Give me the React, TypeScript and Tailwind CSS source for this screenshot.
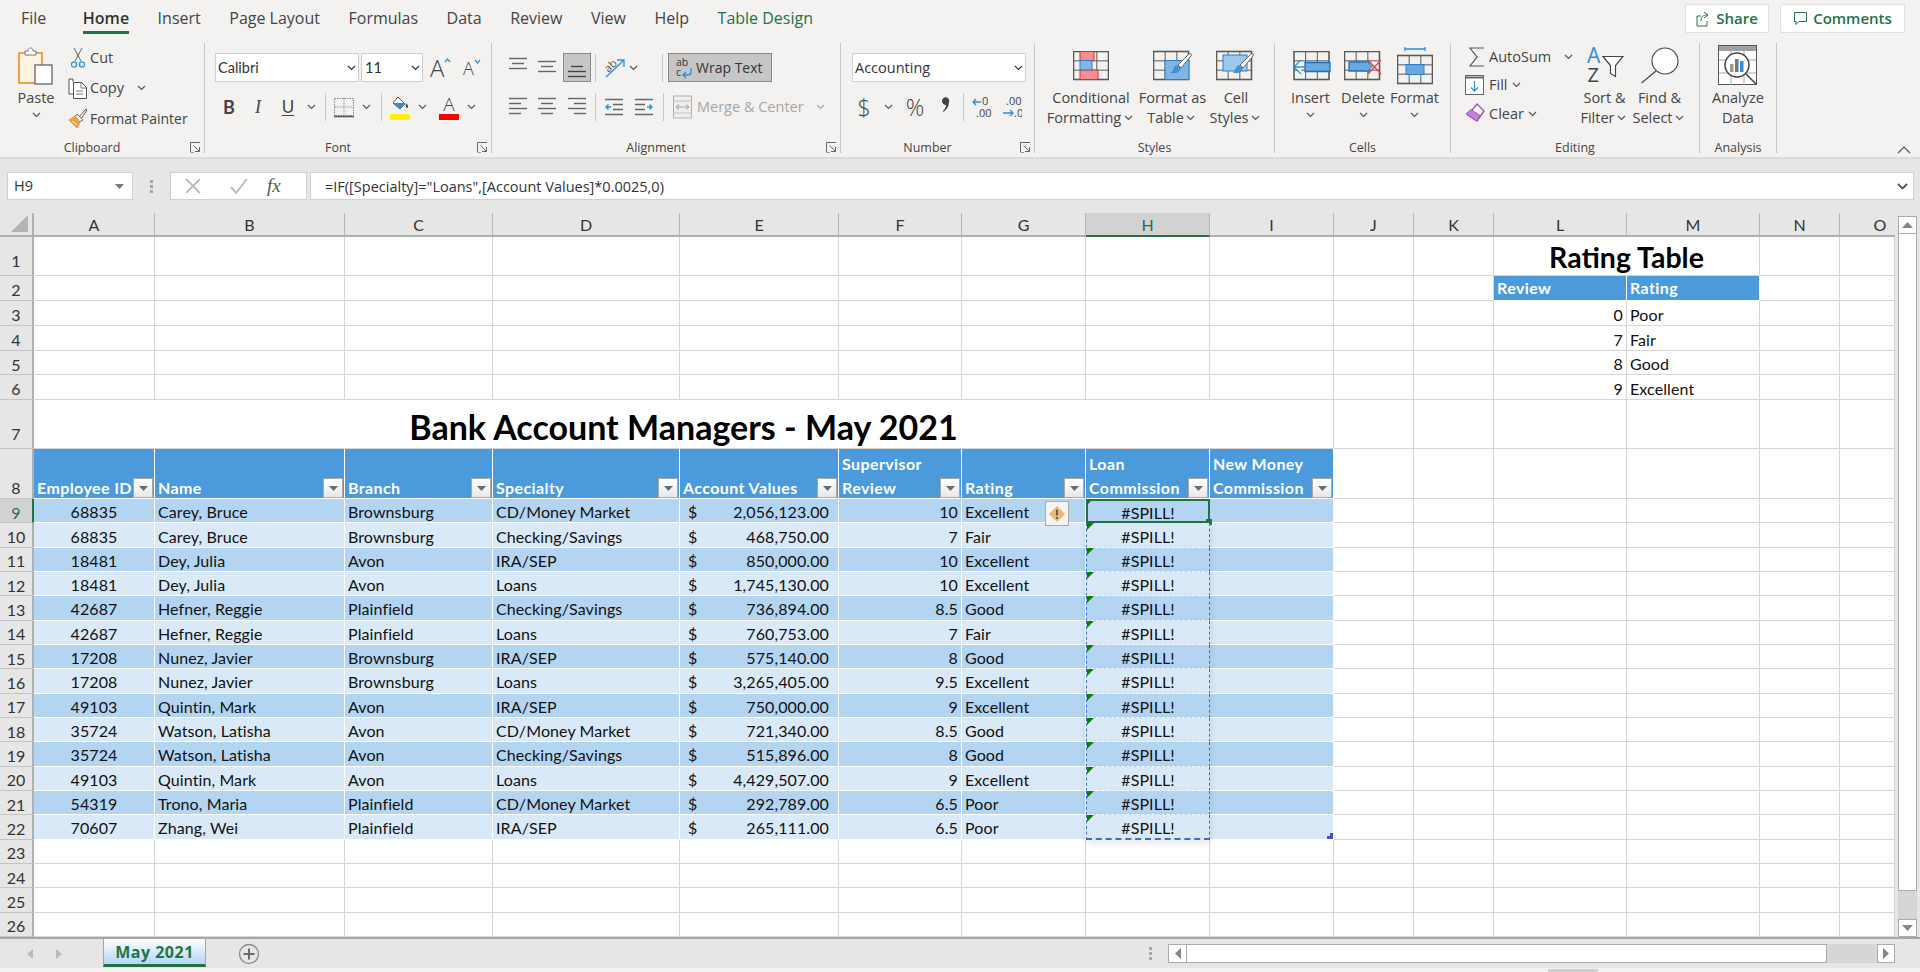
import React from "react";

const UI = "font-['Open_Sans','Noto_Sans',sans-serif]";
const SHEET = "font-['Lato','Carlito','Open_Sans',sans-serif]";

const Chev = ({ className = "w-[14px]", c = "#555" }: { className?: string; c?: string }) => (
  <span className={`flex shrink-0 justify-center ${className}`}>
    <svg width="9" height="6" viewBox="0 0 9 6"><path d="M1 1l3.5 3.5L8 1" fill="none" stroke={c} strokeWidth="1.2" /></svg>
  </span>
);

const Launcher = () => (
  <svg className="absolute right-[3px] bottom-[0px]" width="11" height="11" viewBox="0 0 11 11">
    <path d="M.5 10V.5H10" fill="none" stroke="#666" />
    <path d="M3.5 3.5L9.5 9.5M9.5 5v4.5H5" fill="none" stroke="#666" />
    <path d="M.5 10.5H4" stroke="#999" />
  </svg>
);

const Group = ({ className, label, launcher, children }: { className: string; label: string; launcher?: boolean; children: React.ReactNode }) => (
  <div className={`relative flex h-[110px] shrink-0 flex-col border-r border-[#c8c6c4] ${className}`}>
    <div className="h-[97px] shrink-0">{children}</div>
    <div className={`text-center text-[12.5px] leading-[16px] text-[#444] ${launcher ? "pr-[20px]" : ""}`}>{label}</div>
    {launcher && <Launcher />}
  </div>
);

const Sep = ({ className }: { className: string }) => <span className={`block h-[28px] w-px shrink-0 bg-[#c8c6c4] ${className}`} />;

const Select = ({ text, className }: { text: string; className: string }) => (
  <div className={`flex h-[29px] items-center justify-between border border-[#d2d0ce] bg-white pl-[2px] text-[14.5px] text-[#333] ${className}`}>
    <span>{text}</span>
    <Chev className="w-[14px]" c="#333" />
  </div>
);

const Lines = ({ rows, c = "#666" }: { rows: [number, number, number][]; c?: string }) => (
  <svg width="18" height="22" viewBox="0 0 18 22">
    {rows.map(([a, b, y], i) => (
      <path key={i} d={`M${a} ${y + 0.5}H${b}`} stroke={c} strokeWidth="1.4" />
    ))}
  </svg>
);

const TableGrid = ({ w = 35, h = 28, x = 0.5, y = 0.5 }: { w?: number; h?: number; x?: number; y?: number }) => (
  <g fill="none" stroke="#5a5a5a" strokeWidth="1">
    <rect x={x} y={y} width={w} height={h} strokeWidth="1.6" />
    <path d={`M${x + w / 3} ${y}V${y + h}M${x + (2 * w) / 3} ${y}V${y + h}M${x} ${y + h / 3}H${x + w}M${x} ${y + (2 * h) / 3}H${x + w}`} />
  </g>
);

const Brush = ({ dx = 0, dy = 0 }: { dx?: number; dy?: number }) => (
  <g transform={`translate(${dx} ${dy})`}>
    <path d="M21 1c2-1 3 0 2 2L13 15l-3-3z" fill="#fff" stroke="#666" />
    <path d="M9 12.5l3.5 3c-1 3-4 5-9 4 2-1 2-2 2.500-4 .5-2 2-3 3-3z" fill="#3d9ad9" stroke="#2a7ab8" strokeWidth=".6" />
  </g>
);

const Big = ({ className, icon, lines, chevInline, chevBelow }: { className: string; icon: React.ReactNode; lines: string[]; chevInline?: boolean; chevBelow?: boolean }) => (
  <div className={`flex shrink-0 flex-col items-center text-[14.5px] leading-[20px] text-[#444] ${className}`}>
    <div className="mt-[4px] mb-[1px] flex h-[40px] items-start justify-center">{icon}</div>
    {lines.map((l, i) => (
      <div key={i} className="flex items-center whitespace-nowrap">
        {l}
        {chevInline && i === lines.length - 1 && <Chev className="w-[14px]" />}
      </div>
    ))}
    {chevBelow && <Chev className="mt-[4px] w-[14px]" />}
  </div>
);

function Ribbon() {
  return (
    <div className="flex h-[119px] shrink-0 border-b-2 border-[#dcdcdc] pt-[3px] text-[14.5px] text-[#444]">
      <Group className="w-[205px]" label="Clipboard" launcher>
        <div className="flex">
          <div className="w-[66px]">
            <Big
              className="w-[72px]"
              lines={["Paste"]}
              chevBelow
              icon={
                <svg width="36" height="38" viewBox="0 0 36 38">
                  <rect x="1" y="6" width="23" height="30" fill="#fdf3e3" stroke="#eba24a" strokeWidth="2" />
                  <path d="M7 8V4h3c0-4 5-4 5 0h3v4z" fill="#fff" stroke="#777" />
                  <rect x="17" y="18" width="17" height="19" fill="#fff" stroke="#666" strokeWidth="1.3" />
                </svg>
              }
            />
          </div>
          <div className="flex w-[139px] flex-col">
            <div className="flex h-[30px] items-center">
              <span className="flex w-[24px] justify-center">
                <svg width="14" height="22" viewBox="0 0 14 22">
                  <path d="M3 1l7 13M11 1L4 14" stroke="#666" fill="none" />
                  <circle cx="3" cy="17.500" r="2.600" fill="none" stroke="#2e8fd6" strokeWidth="1.3" />
                  <circle cx="11" cy="17.500" r="2.600" fill="none" stroke="#2e8fd6" strokeWidth="1.300" />
                </svg>
              </span>
              Cut
            </div>
            <div className="flex h-[30px] items-center">
              <span className="flex w-[24px] justify-center">
                <svg width="20" height="21" viewBox="0 0 20 21">
                  <path d="M5 4V1h-4v15h4" fill="#fff" stroke="#555" />
                  <path d="M5.500 4.500h8l5 5v11h-13z" fill="#fff" stroke="#555" />
                  <path d="M13 5v5h5M8 13h7M8 16h7" fill="none" stroke="#777" />
                </svg>
              </span>
              Copy
              <Chev className="ml-[10px] w-[14px]" />
            </div>
            <div className="flex h-[30px] items-center text-[14px]">
              <span className="flex w-[24px] justify-center">
                <svg width="20" height="22" viewBox="0 0 20 22">
                  <path d="M11 10L18 2l1 1-6 9z" fill="#fff" stroke="#555" />
                  <path d="M9 7l6 6-4 2-4-5z" fill="#fff" stroke="#666" />
                  <path d="M7 9l5 6-3 6-8-8z" fill="#f3a33e" stroke="#d9822b" strokeWidth=".8" />
                  <path d="M4 14l5 4" stroke="#fff" strokeWidth=".8" />
                </svg>
              </span>
              Format Painter
            </div>
          </div>
        </div>
      </Group>

      <Group className="w-[287px]" label="Font" launcher>
        <div className="mt-[10px] flex items-center pl-[10px]">
          <Select text="Calibri" className={`w-[144px] ${SHEET}`} />
          <Select text="11" className={`ml-[2px] w-[62px] pl-[3px] ${SHEET}`} />
          <span className="ml-[7px] flex w-[22px] items-start text-[24px] leading-[26px] font-light text-[#444]">A<svg className="mt-[3px] shrink-0" width="7" height="5" viewBox="0 0 7 5"><path d="M1 4l2.500-3L6 4" fill="none" stroke="#2e8fd6" strokeWidth="1.200" /></svg></span>
          <span className="ml-[11px] flex w-[20px] items-start text-[18px] leading-[26px] font-light text-[#444]">A<svg className="mt-[4px] shrink-0" width="7" height="5" viewBox="0 0 7 5"><path d="M1 1l2.500 3L6 1" fill="none" stroke="#2e8fd6" strokeWidth="1.200" /></svg></span>
        </div>
        <div className="mt-[10px] flex h-[30px] items-center pl-[12px] text-[#444]">
          <span className={`w-[24px] text-center text-[18px] font-bold ${SHEET}`}>B</span>
          <span className="ml-[5px] w-[24px] text-center font-['Liberation_Serif',serif] text-[18px] italic">I</span>
          <span className={`ml-[6px] w-[24px] text-center text-[17px] underline underline-offset-2 ${SHEET}`}>U</span>
          <Chev className="ml-[4px] w-[14px]" />
          <Sep className="ml-[7px]" />
          <span className="ml-[8px] w-[20px]">
            <svg width="20" height="24" viewBox="0 0 20 24">
              <path d="M.5 3.500h19v17H.5z" fill="none" stroke="#888" strokeDasharray="1.500 1" />
              <path d="M10 3v17M1 12h18" stroke="#999" strokeDasharray="1.500 1" />
              <path d="M0 21.500h20" stroke="#555" strokeWidth="1.600" />
            </svg>
          </span>
          <Chev className="ml-[5px] w-[14px]" />
          <Sep className="ml-[8px]" />
          <span className="ml-[8px] w-[20px]">
            <svg width="20" height="26" viewBox="0 0 20 26">
              <path d="M8 3l7 7-5 5-7-6z" fill="#fff" stroke="#555" />
              <path d="M3 9h12l-5 6z" fill="#2e8fd6" />
              <path d="M16 9c2 2 3 4 1.500 5-1.500 0-2-2-1.500-5z" fill="#444" />
              <rect y="20" width="20" height="6" fill="#fff200" />
            </svg>
          </span>
          <Chev className="ml-[5px] w-[14px]" />
          <span className="ml-[10px] flex w-[20px] flex-col items-center">
            <span className="text-[19px] leading-[20px] font-light">A</span>
            <span className="block h-[6px] w-[20px] bg-[#f00]" />
          </span>
          <Chev className="ml-[5px] w-[14px]" />
        </div>
      </Group>

      <Group className="w-[349px]" label="Alignment" launcher>
        <div className="mt-[10px] flex h-[29px] items-center pl-[17px]">
          <Lines rows={[[0, 18, 1], [3, 15, 6], [0, 18, 11]]} />
          <span className="ml-[11px]"><Lines rows={[[0, 18, 4], [3, 15, 9], [0, 18, 14]]} /></span>
          <span className="ml-[7px] flex h-[29px] w-[28px] items-center justify-center border border-[#8a8a8a] bg-[#c6c6c6]">
            <Lines rows={[[3, 15, 9], [0, 18, 14], [0, 18, 19]]} c="#444" />
          </span>
          <Sep className="ml-[4px]" />
          <span className="ml-[8px] w-[21px]">
            <svg width="21" height="20" viewBox="0 0 21 20">
              <path d="M2 19L19 3M13 2h7v7" fill="none" stroke="#2e8fd6" strokeWidth="1.300" />
              <text x="0" y="12" fontSize="11" fontFamily="Open Sans" fill="#555" transform="rotate(-45 6 8)">ab</text>
            </svg>
          </span>
          <Chev className="ml-[1px] w-[14px]" />
          <Sep className="ml-[22px]" />
          <span className="ml-[5px] flex h-[29px] w-[104px] items-center gap-[3px] border border-[#8a8a8a] bg-[#c6c6c6] pl-[6px] text-[14px] text-[#333]">
            <svg width="18" height="22" viewBox="0 0 18 22">
              <text x="1" y="9" fontSize="10.500" fontFamily="Open Sans" fill="#333">ab</text>
              <text x="1" y="19" fontSize="10.500" fontFamily="Open Sans" fill="#333">c</text>
              <path d="M16 11v4c0 2-1 3-3 3H8M11 15l-3 3 3 3" fill="none" stroke="#2e8fd6" strokeWidth="1.300" />
            </svg>
            Wrap Text
          </span>
        </div>
        <div className="mt-[10px] flex h-[30px] items-center pl-[17px]">
          <Lines rows={[[0, 18, 2], [0, 12, 7], [0, 18, 12], [0, 12, 17]]} />
          <span className="ml-[11px]"><Lines rows={[[0, 18, 2], [3, 15, 7], [0, 18, 12], [3, 15, 17]]} /></span>
          <span className="ml-[12px]"><Lines rows={[[0, 18, 2], [6, 18, 7], [0, 18, 12], [6, 18, 17]]} /></span>
          <Sep className="ml-[9px]" />
          <span className="ml-[9px] w-[18px]">
            <svg width="18" height="20" viewBox="0 0 18 20">
              <path d="M0 2.500h18M8 7.500h10M8 12.500h10M0 17.500h18" stroke="#666" strokeWidth="1.300" />
              <path d="M6 10H1M3.500 7.500L1 10l2.500 2.500" fill="none" stroke="#2e8fd6" strokeWidth="1.400" />
            </svg>
          </span>
          <span className="ml-[12px] w-[18px]">
            <svg width="18" height="20" viewBox="0 0 18 20">
              <path d="M0 2.500h18M0 7.500h10M0 12.500h10M0 17.500h18" stroke="#666" strokeWidth="1.300" />
              <path d="M12 10h5M14.500 7.500L17 10l-2.500 2.500" fill="none" stroke="#2e8fd6" strokeWidth="1.400" />
            </svg>
          </span>
          <Sep className="ml-[10px]" />
          <span className="ml-[9px] w-[19px]">
            <svg width="19" height="24" viewBox="0 0 19 24">
              <rect x=".5" y="1" width="18" height="22" fill="#eee" stroke="#b0b0b0" />
              <path d="M1 6h17M1 18h17" stroke="#c0c0c0" />
              <path d="M3 12h13M6 9.500L3 12l3 2.500M13 9.500L16 12l-3 2.500" fill="none" stroke="#a0a0a0" />
            </svg>
          </span>
          <span className="ml-[5px] w-[110px] whitespace-nowrap text-[#a6a6a6]">Merge &amp; Center</span>
          <Chev className="ml-[6px] w-[14px]" c="#aaa" />
        </div>
      </Group>

      <Group className="w-[194px]" label="Number" launcher>
        <div className="mt-[10px] pl-[11px]">
          <Select text="Accounting" className="w-[174px]" />
        </div>
        <div className="mt-[10px] flex h-[30px] items-center pl-[13px] text-[#444]">
          <span className="w-[20px] text-center text-[23px] font-light">$</span>
          <Chev className="ml-[7px] w-[14px]" />
          <span className="ml-[8px] w-[24px] text-center text-[23px] font-light">%</span>
          <span className="ml-[8px] flex h-[20px] w-[20px] justify-center">
            <svg width="9" height="17" viewBox="0 0 9 17"><path d="M1 4a3.600 3.600 0 1 1 7 1c0 4-2 7-5.500 10L2 14c2-2 3-4 3-6C3 8 1 6.500 1 4z" fill="#444" /></svg>
          </span>
          <Sep className="ml-[8px]" />
          <span className="ml-[8px] w-[20px]">
            <svg width="20" height="24" viewBox="0 0 20 24">
              <text x="10" y="10" fontSize="11" fontFamily="Open Sans" fill="#444">0</text>
              <text x="4" y="22" fontSize="11" fontFamily="Open Sans" fill="#444">.00</text>
              <path d="M9 7H1M4 4L1 7l3 3" fill="none" stroke="#2e8fd6" strokeWidth="1.300" />
            </svg>
          </span>
          <span className="ml-[10px] w-[20px]">
            <svg width="20" height="24" viewBox="0 0 20 24">
              <text x="4" y="10" fontSize="11" fontFamily="Open Sans" fill="#444">.00</text>
              <text x="12" y="22" fontSize="11" fontFamily="Open Sans" fill="#444">.0</text>
              <path d="M1 18h10M8 15l3 3-3 3" fill="none" stroke="#2e8fd6" strokeWidth="1.300" />
            </svg>
          </span>
        </div>
      </Group>

      <Group className="w-[240px]" label="Styles">
        <div className="flex pl-[10px]">
          <Big
            className="w-[92px]"
            lines={["Conditional", "Formatting"]}
            chevInline
            icon={
              <svg width="36" height="32" viewBox="0 0 36 32" className="mt-[4px]">
                <TableGrid />
                <path d="M7 .5h14v9H7zM7 19h18v9.500H7z" fill="#f58d93" stroke="#e0262e" />
                <rect x="7" y="9.500" width="12" height="9.500" fill="#7fb6e6" stroke="#2e7fc0" />
              </svg>
            }
          />
          <Big
            className="w-[71px]"
            lines={["Format as", "Table"]}
            chevInline
            icon={
              <svg width="40" height="38" viewBox="0 0 40 38">
                <g transform="translate(0 4)"><TableGrid /></g>
                <rect x="12" y="13.500" width="24" height="19" fill="#7fb6e6" stroke="#2a7fc4" />
                <Brush dx="15" dy="6" />
              </svg>
            }
          />
          <Big
            className="w-[56px]"
            lines={["Cell", "Styles"]}
            chevInline
            icon={
              <svg width="40" height="38" viewBox="0 0 40 38">
                <g transform="translate(0 4)"><TableGrid /></g>
                <rect x="7" y="8" width="24" height="16" fill="#9cc8ee" stroke="#2a7fc4" />
                <Brush dx="14" dy="6" />
              </svg>
            }
          />
        </div>
      </Group>

      <Group className="w-[176px]" label="Cells">
        <div className="flex pl-[9px]">
          <Big
            className="w-[53px]"
            lines={["Insert"]}
            chevBelow
            icon={
              <svg width="40" height="32" viewBox="0 0 40 32" className="mt-[4px]">
                <g transform="translate(2.500 0)"><TableGrid /></g>
                <path d="M14 11.500h25v9H14z" fill="#6aa8df" stroke="#1c71b8" strokeWidth="1.300" />
                <path d="M10 9l-7 7 7 7M4 16h10" fill="#fff" stroke="#2e8fd6" strokeWidth="1.300" />
              </svg>
            }
          />
          <Big
            className="w-[52px]"
            lines={["Delete"]}
            chevBelow
            icon={
              <svg width="38" height="32" viewBox="0 0 38 32" className="mt-[4px]">
                <TableGrid />
                <path d="M5 11h20v9H5z" fill="#6aa8df" stroke="#1c71b8" strokeWidth="1.300" />
                <path d="M23 10l5 5.500-5 5.500" fill="#6aa8df" stroke="#1c71b8" />
                <path d="M24 9l13 14M37 9L24 23" stroke="#ef4444" strokeWidth="1.500" />
              </svg>
            }
          />
          <Big
            className="w-[51px]"
            lines={["Format"]}
            chevBelow
            icon={
              <svg width="36" height="40" viewBox="0 0 36 40">
                <path d="M8 2h20M8 0v4M28 0v4" stroke="#2e8fd6" strokeWidth="1.300" />
                <g transform="translate(0 8)"><TableGrid /></g>
                <rect x="9" y="17.500" width="18" height="10" fill="#6aa8df" stroke="#2a7fc4" />
              </svg>
            }
          />
        </div>
      </Group>

      <Group className="w-[249px]" label="Editing">
        <div className="flex">
          <div className="flex w-[127px] flex-col pl-[14px]">
            <div className="flex h-[27px] items-center">
              <span className="flex w-[24px] justify-center">
                <svg width="16" height="20" viewBox="0 0 16 20"><path d="M15 1H1l7 9-7 9h14" fill="none" stroke="#555" strokeWidth="1.200" /></svg>
              </span>
              AutoSum
              <Chev className="ml-[10px] w-[14px]" />
            </div>
            <div className="flex h-[29px] items-center">
              <span className="flex w-[24px] justify-start">
                <svg width="19" height="20" viewBox="0 0 19 20">
                  <rect x=".5" y=".5" width="18" height="19" fill="#fff" stroke="#666" />
                  <path d="M0 2.500h19" stroke="#666" strokeWidth="2" />
                  <path d="M9.500 6v10M6 12.500l3.500 3.500 3.500-3.500" fill="none" stroke="#2e8fd6" strokeWidth="1.300" />
                </svg>
              </span>
              Fill
              <Chev className="ml-[2px] w-[14px]" />
            </div>
            <div className="flex h-[29px] items-center">
              <span className="flex w-[24px] justify-start">
                <svg width="20" height="22" viewBox="0 0 20 22">
                  <path d="M12 1l7 7-7 10-9-6z" fill="#fff" stroke="#a24dbb" strokeWidth="1.400" />
                  <path d="M6 6.500l9 6-3 5.500-9-6-2-1z" fill="#c583d6" stroke="#a24dbb" />
                </svg>
              </span>
              Clear
              <Chev className="ml-[2px] w-[14px]" />
            </div>
          </div>
          <Big
            className="w-[53px]"
            lines={["Sort &", "Filter"]}
            chevInline
            icon={
              <svg width="38" height="40" viewBox="0 0 38 40">
                <text x="1" y="16" fontSize="21" fontFamily="Open Sans" fill="#2e8fd6">A</text>
                <text x="1.500" y="35" fontSize="20" fontFamily="Open Sans" fill="#444">Z</text>
                <path d="M17 9.500h20l-7.500 9v11l-5-3v-8z" fill="#fff" stroke="#444" strokeWidth="1.200" />
              </svg>
            }
          />
          <Big
            className="w-[57px]"
            lines={["Find &", "Select"]}
            chevInline
            icon={
              <svg width="40" height="38" viewBox="0 0 40 38">
                <circle cx="25" cy="14" r="13" fill="#fff" stroke="#444" strokeWidth="1.100" />
                <path d="M16 24L1.500 36" stroke="#444" strokeWidth="1.100" />
              </svg>
            }
          />
        </div>
      </Group>

      <Group className="w-[77px]" label="Analysis">
        <Big
          className="w-[76px]"
          lines={["Analyze", "Data"]}
          icon={
            <svg width="40" height="41" viewBox="0 0 40 41" className="-mt-[2px]">
              <rect x=".5" y=".5" width="38" height="39" fill="#fff" stroke="#555" />
              <rect x="1" y="1" width="37" height="5" fill="#a0a0a0" />
              <path d="M13 6v34M26 6v34M1 15h37M1 28h37" stroke="#aaa" />
              <circle cx="19" cy="20" r="12" fill="#fff" stroke="#444" strokeWidth="1.500" />
              <path d="M28 29l10 10" stroke="#444" strokeWidth="1.600" />
              <rect x="12" y="19" width="3.500" height="8" fill="#9a9a9a" />
              <rect x="17" y="14" width="3.500" height="13" fill="#777" />
              <rect x="22" y="16" width="3.500" height="11" fill="#2e8fd6" />
            </svg>
          }
        />
      </Group>
      <div className="flex flex-1 items-end justify-end pr-[9px] pb-[3px]">
        <svg width="14" height="8" viewBox="0 0 14 8"><path d="M1 7l6-6 6 6" fill="none" stroke="#555" strokeWidth="1.200" /></svg>
      </div>
    </div>
  );
}

function FormulaBar() {
  return (
    <div className="flex h-[54px] shrink-0 items-start bg-[#e6e6e6] pt-[13px] text-[14.5px] text-[#333]">
      <div className="ml-[7px] flex h-[28px] w-[126px] items-center justify-between border border-[#d2d0ce] bg-white pr-[8px] pl-[6px]">
        H9
        <svg width="9" height="5" viewBox="0 0 9 5"><path d="M0 0h9L4.500 5z" fill="#777" /></svg>
      </div>
      <div className="ml-[17px] flex h-[28px] w-[3px] flex-col items-center justify-center gap-[2px]">
        <span className="block h-[3px] w-[3px] bg-[#a6a6a6]" />
        <span className="block h-[3px] w-[3px] bg-[#a6a6a6]" />
        <span className="block h-[3px] w-[3px] bg-[#a6a6a6]" />
      </div>
      <div className="ml-[17px] flex h-[28px] w-[137px] items-center border border-[#d2d0ce] bg-white">
        <svg className="ml-[14px]" width="16" height="16" viewBox="0 0 16 16"><path d="M1 1l14 14M15 1L1 15" stroke="#bdbdbd" strokeWidth="1.800" /></svg>
        <svg className="ml-[29px]" width="18" height="16" viewBox="0 0 18 16"><path d="M1 9l5 6L17 1" fill="none" stroke="#bdbdbd" strokeWidth="2" /></svg>
        <span className="ml-[19px] font-['Liberation_Serif',serif] text-[19px] text-[#555] italic">fx</span>
      </div>
      <div className="mr-[6px] ml-[3px] flex h-[28px] flex-1 items-center justify-between border border-[#d2d0ce] bg-white pr-[5px] pl-[14px]">
        <span className="translate-y-[1px]">=IF([Specialty]="Loans",[Account Values]*0.0025,0)</span>
        <svg width="11" height="7" viewBox="0 0 11 7"><path d="M1 1l4.500 4.500L10 1" fill="none" stroke="#555" strokeWidth="1.800" /></svg>
      </div>
    </div>
  );
}

type R = [number, string, string, string, string, string, string];
const rows: R[] = [
  [68835, "Carey, Bruce", "Brownsburg", "CD/Money Market", "2,056,123.00", "10", "Excellent"],
  [68835, "Carey, Bruce", "Brownsburg", "Checking/Savings", "468,750.00", "7", "Fair"],
  [18481, "Dey, Julia", "Avon", "IRA/SEP", "850,000.00", "10", "Excellent"],
  [18481, "Dey, Julia", "Avon", "Loans", "1,745,130.00", "10", "Excellent"],
  [42687, "Hefner, Reggie", "Plainfield", "Checking/Savings", "736,894.00", "8.5", "Good"],
  [42687, "Hefner, Reggie", "Plainfield", "Loans", "760,753.00", "7", "Fair"],
  [17208, "Nunez, Javier", "Brownsburg", "IRA/SEP", "575,140.00", "8", "Good"],
  [17208, "Nunez, Javier", "Brownsburg", "Loans", "3,265,405.00", "9.5", "Excellent"],
  [49103, "Quintin, Mark", "Avon", "IRA/SEP", "750,000.00", "9", "Excellent"],
  [35724, "Watson, Latisha", "Avon", "CD/Money Market", "721,340.00", "8.5", "Good"],
  [35724, "Watson, Latisha", "Avon", "Checking/Savings", "515,896.00", "8", "Good"],
  [49103, "Quintin, Mark", "Avon", "Loans", "4,429,507.00", "9", "Excellent"],
  [54319, "Trono, Maria", "Plainfield", "CD/Money Market", "292,789.00", "6.5", "Poor"],
  [70607, "Zhang, Wei", "Plainfield", "IRA/SEP", "265,111.00", "6.5", "Poor"],
];

const Cell = ({ className = "", children }: { className?: string; children?: React.ReactNode }) => (
  <div className={`flex min-w-0 items-center border-r border-b border-[#d6d6d6] pt-[3px] tracking-[0.1px] whitespace-nowrap ${className}`}>{children}</div>
);

const RowH = ({ n, active, end }: { n: number; active?: boolean; end?: boolean }) => (
  <div className={`flex justify-center border-b border-b-[#c4c4c4] leading-[24px] ${end ? "items-end" : "items-center"} ${active ? "border-r-2 border-r-[#217346] bg-[#d2d2d2] text-[#217346]" : "border-r-2 border-r-[#b0b0b0] bg-[#e6e6e6] text-[#333]"}`}>
    <span className={n === 1 || n === 7 ? "-translate-y-[2px]" : "translate-y-[2px]"}>{n}</span>
  </div>
);

const Filter = () => (
  <span className="absolute right-[1px] bottom-[0px] flex h-[20px] w-[20px] items-center justify-center border border-[#a8a8a8] bg-gradient-to-b from-white to-[#e8e8e8]">
    <svg width="9" height="5" viewBox="0 0 9 5"><path d="M0 0h9L4.500 5z" fill="#6b6b6b" /></svg>
  </span>
);

const Head = ({ lines }: { lines: string[] }) => (
  <div className="relative flex flex-col justify-end border-r border-b border-white bg-[#4a9adc] pl-[3px] text-[16px] leading-[24px] font-bold tracking-[0.4px] whitespace-nowrap text-white">
    {lines.map((l) => (
      <span key={l} className="translate-y-[2px]">{l}</span>
    ))}
    <Filter />
  </div>
);

const Empty = ({ count }: { count: number }) => (
  <>
    {Array.from({ length: count }).map((_, i) => (
      <Cell key={i} />
    ))}
  </>
);

const letters = ["A", "B", "C", "D", "E", "F", "G", "H", "I", "J", "K", "L", "M", "N", "O"];

function Sheet() {
  return (
    <div className={`grid h-[724px] w-[1895px] shrink-0 grid-cols-[34px_121px_190px_148px_187px_159px_123px_124px_124px_124px_80px_80px_133px_133px_80px_55px] grid-rows-[24px_39px_25px_25px_25px_24px_25px_49px_50px_repeat(18,24.33px)] bg-white text-[16px] text-[#111] ${SHEET}`}>
      <div className="flex items-end justify-end border-r-2 border-b-2 border-r-[#b0b0b0] border-b-[#b0b0b0] bg-[#e6e6e6] pr-[4px] pb-[3px]">
        <svg width="17" height="17" viewBox="0 0 17 17"><path d="M17 0v17H0z" fill="#b4b4b4" /></svg>
      </div>
      {letters.map((l) => (
        <div key={l} className={`flex items-center justify-center border-b-2 pt-[2px] leading-[22px] ${l === "H" ? "border-b-[#217346] bg-[#d2d2d2] text-[#217346]" : "border-b-[#b0b0b0] bg-[#e6e6e6] text-[#333]"} ${l === "O" ? "pl-[25px]" : "border-r border-r-[#b4b4b4]"}`}>
          {l}
        </div>
      ))}

      {/* row 1 */}
      <RowH n={1} end />
      <Empty count={11} />
      <Cell className="col-span-2 justify-center text-[28.5px] font-bold tracking-normal text-black">Rating Table</Cell>
      <Empty count={2} />
      {/* row 2 */}
      <RowH n={2} />
      <Empty count={11} />
      <div className="flex items-end border-r border-b border-white bg-[#4a9adc] pl-[3px] leading-[24px] font-bold tracking-[0.4px] text-white">Review</div>
      <div className="flex items-end border-r border-b border-white bg-[#4a9adc] pl-[3px] leading-[24px] font-bold tracking-[0.4px] text-white">Rating</div>
      <Empty count={2} />
      {/* rows 3-6 */}
      {([["0", "Poor"], ["7", "Fair"], ["8", "Good"], ["9", "Excellent"]] as const).map(([a, b], i) => (
        <React.Fragment key={a}>
          <RowH n={i + 3} />
          <Empty count={11} />
          <Cell className="justify-end pr-[3px]">{a}</Cell>
          <Cell className="pl-[3px]">{b}</Cell>
          <Empty count={2} />
        </React.Fragment>
      ))}
      {/* row 7 */}
      <RowH n={7} end />
      <Cell className="col-span-9 justify-center pt-[4px] text-[34px] font-bold tracking-normal text-black">Bank Account Managers - May 2021</Cell>
      <Empty count={6} />
      {/* row 8 */}
      <RowH n={8} end />
      <Head lines={["Employee ID"]} />
      <Head lines={["Name"]} />
      <Head lines={["Branch"]} />
      <Head lines={["Specialty"]} />
      <Head lines={["Account Values"]} />
      <Head lines={["Supervisor", "Review"]} />
      <Head lines={["Rating"]} />
      <Head lines={["Loan", "Commission"]} />
      <Head lines={["New Money", "Commission"]} />
      <Empty count={6} />
      {/* data */}
      {rows.map((r, i) => {
        const band = i % 2 === 0 ? "bg-[#b4d5f1]" : "bg-[#d9e9f8]";
        const td = `border-white ${band}`;
        const last = i === rows.length - 1;
        return (
          <React.Fragment key={i}>
            <RowH n={i + 9} active={i === 0} />
            <Cell className={`${td} justify-center`}>{r[0]}</Cell>
            <Cell className={`${td} pl-[3px]`}>{r[1]}</Cell>
            <Cell className={`${td} pl-[3px]`}>{r[2]}</Cell>
            <Cell className={`${td} pl-[3px]`}>{r[3]}</Cell>
            <Cell className={`${td} justify-between pr-[9px] pl-[8px]`}>
              <span>$</span>
              <span>{r[4]}</span>
            </Cell>
            <Cell className={`${td} justify-end pr-[3px]`}>{r[5]}</Cell>
            <Cell className={`${td} relative pl-[3px]`}>
              {r[6]}
              {i === 0 && (
                <span className="absolute top-[2px] left-[83px] z-20 flex h-[25px] w-[24px] items-center justify-center border border-[#a8a8a8] bg-[#f4f4f4]">
                  <svg width="18" height="18" viewBox="0 0 18 18">
                    <path d="M9 1l8 8-8 8-8-8z" fill="#e9b873" />
                    <path d="M9 4.500v6M9 12v2" stroke="#555" strokeWidth="1.800" />
                  </svg>
                </span>
              )}
            </Cell>
            <div
              className={`relative z-10 flex items-center justify-center pt-[3px] tracking-[0.1px] ${band} ${
                i === 0
                  ? "border-white"
                  : `border-x border-dashed border-x-[#3f6cc4] shadow-[0_3px_8px_rgba(0,0,0,0.10)] ${last ? "border-b-2 border-b-[#3f6cc4]" : "border-b border-b-white"}`
              }`}
            >
              #SPILL!
              <span className="absolute top-0 left-0 h-0 w-0 border-t-[7px] border-r-[7px] border-t-[#0a7d0a] border-r-transparent" />
              {i === 0 && (
                <span className="absolute inset-0 border-2 border-[#217346]">
                  <span className="absolute -right-[4px] -bottom-[4px] h-[6px] w-[6px] bg-[#217346]" />
                </span>
              )}
            </div>
            <Cell className={`${td} relative`}>
              {last && (
                <svg className="absolute right-0 bottom-0" width="6" height="6" viewBox="0 0 6 6">
                  <path d="M6 0v6H0V3h3V0z" fill="#4257b5" />
                </svg>
              )}
            </Cell>
            <Empty count={6} />
          </React.Fragment>
        );
      })}
      {/* rows 23-26 */}
      {[23, 24, 25, 26].map((n) => (
        <React.Fragment key={n}>
          <RowH n={n} />
          <Empty count={15} />
        </React.Fragment>
      ))}
    </div>
  );
}

const ScrollBtn = ({ up }: { up?: boolean }) => (
  <div className="flex h-[18px] w-[19px] items-center justify-center border border-[#ababab] bg-white">
    <svg width="11" height="6" viewBox="0 0 11 6"><path d={up ? "M0 6L5.500 0 11 6z" : "M0 0h11L5.500 6z"} fill="#858585" /></svg>
  </div>
);

export default function App() {
  return (
    <div className={`flex h-[972px] w-[1920px] flex-col overflow-hidden bg-[#f3f2f1] ${UI}`}>
      <div className="flex h-[40px] shrink-0 items-start justify-between pr-[15px]">
        <div className="flex items-center gap-[28.5px] pl-[21px] text-[16px] leading-[37px] text-[#444]">
          <span className="mr-[8px]">File</span>
          <span className="relative font-semibold text-[#333]">
            Home
            <span className="absolute right-0 bottom-[3px] left-0 h-[3px] bg-[#217346]" />
          </span>
          <span>Insert</span>
          <span>Page Layout</span>
          <span>Formulas</span>
          <span>Data</span>
          <span>Review</span>
          <span>View</span>
          <span>Help</span>
          <span className="text-[#217346]">Table Design</span>
        </div>
        <div className="mt-[4px] flex items-center gap-[11px]">
          <div className="flex h-[29px] w-[84px] items-center justify-center gap-[5px] rounded-[2px] border border-[#e1dfdd] bg-white text-[15px] font-semibold text-[#217346]">
            <svg width="15" height="16" viewBox="0 0 15 16">
              <path d="M5 5H1v10h10v-5M5 10c0-4 2-6 6-6M8 1l4 3-4 3" fill="none" stroke="#217346" />
            </svg>
            Share
          </div>
          <div className="flex h-[29px] w-[125px] items-center justify-center gap-[5px] rounded-[2px] border border-[#e1dfdd] bg-white text-[15px] font-semibold text-[#217346]">
            <svg width="15" height="15" viewBox="0 0 15 15">
              <path d="M1.500 1.500h12v9H6l-3 3v-3H1.500z" fill="none" stroke="#217346" />
            </svg>
            Comments
          </div>
        </div>
      </div>
      <Ribbon />
      <FormulaBar />
      <div className="flex h-[724px] shrink-0">
        <Sheet />
        <div className="flex flex-1 flex-col items-center bg-[#e6e6e6] pt-[3px] pl-[0px]">
          <ScrollBtn up />
          <div className="h-[659px] w-[19px] border-x border-b border-[#ababab] bg-white" />
          <div className="h-[28px] w-[19px] bg-[#d6d6d6]" />
          <ScrollBtn />
        </div>
      </div>
      <div className="flex h-[31px] shrink-0 items-center border-t-2 border-[#a6a6a6] bg-[#e6e6e6]">
        <svg className="ml-[27px]" width="6" height="10" viewBox="0 0 6 10"><path d="M6 0v10L0 5z" fill="#bbb" /></svg>
        <svg className="ml-[23px]" width="6" height="10" viewBox="0 0 6 10"><path d="M0 0v10l6-5z" fill="#bbb" /></svg>
        <div className="mb-[2px] ml-[41px] flex h-[28px] w-[103px] items-center justify-center self-start border-x border-b-[3px] border-x-[#a6a6a6] border-b-[#217346] bg-gradient-to-b from-white to-[#b4d5f1] text-[16px] font-bold tracking-[0.5px] text-[#217346]">
          May 2021
        </div>
        <svg className="ml-[32px]" width="22" height="22" viewBox="0 0 22 22">
          <circle cx="11" cy="11" r="9.500" fill="none" stroke="#8a8a8a" strokeWidth="1.300" />
          <path d="M11 5.500v11M5.500 11h11" stroke="#6a6a6a" strokeWidth="2" />
        </svg>
        <div className="ml-[889px] flex flex-col gap-[2px]">
          <span className="block h-[3px] w-[3px] bg-[#a6a6a6]" />
          <span className="block h-[3px] w-[3px] bg-[#a6a6a6]" />
          <span className="block h-[3px] w-[3px] bg-[#a6a6a6]" />
        </div>
        <div className="ml-[16px] flex h-[19px] w-[727px] items-stretch">
          <div className="flex w-[19px] items-center justify-center border border-[#ababab] bg-white">
            <svg width="6" height="11" viewBox="0 0 6 11"><path d="M6 0v11L0 5.500z" fill="#858585" /></svg>
          </div>
          <div className="w-[640px] border-y border-r border-[#ababab] bg-white" />
          <div className="flex-1 bg-[#d6d6d6]" />
          <div className="flex w-[18px] items-center justify-center border border-[#ababab] bg-white">
            <svg width="6" height="11" viewBox="0 0 6 11"><path d="M0 0v11l6-5.500z" fill="#858585" /></svg>
          </div>
        </div>
      </div>
      <div className="flex h-[4px] shrink-0 justify-start pl-[1548px]">
        <div className="mt-[1px] h-[3px] w-[50px] bg-[#cfcfcf]" />
      </div>
    </div>
  );
}
